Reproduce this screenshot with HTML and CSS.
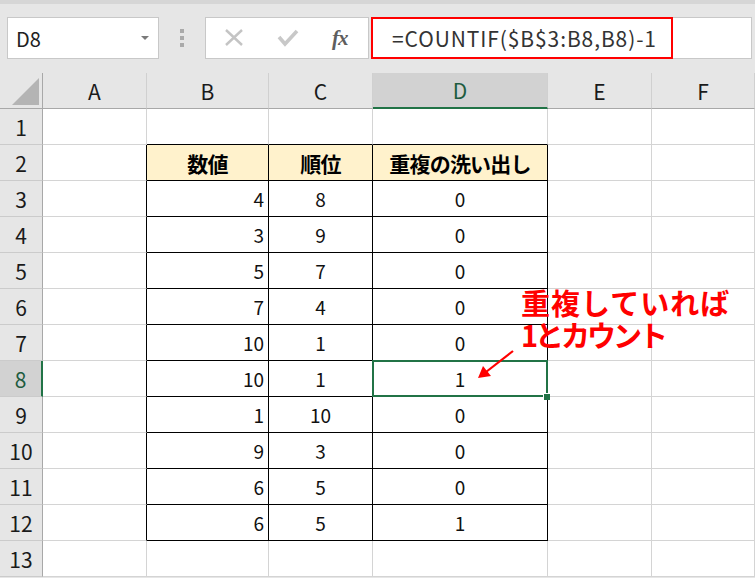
FILE: index.html
```html
<!DOCTYPE html>
<html lang="ja">
<head>
<meta charset="utf-8">
<title>COUNTIF 重複</title>
<link rel="stylesheet" href="styles.css">
</head>
<body>
<div class="app">
  <div class="topstrip"></div>
  <div class="toolbar">
    <div class="namebox"><span>D8</span><span class="dd"></span></div>
    <div class="grip"><i></i><i></i><i></i></div>
    <div class="btns">
      <svg class="ico" width="20" height="20" viewBox="0 0 20 20"><path d="M2 2 L18 17 M18 2 L2 17" stroke="#c4c4c4" stroke-width="2.4" fill="none"/></svg>
      <svg class="ico" width="22" height="20" viewBox="0 0 22 20"><path d="M2 9 L8 16 L20 3" stroke="#c8c8c8" stroke-width="3.6" fill="none"/></svg>
      <span class="fx">fx</span>
    </div>
    <div class="formula"><div class="fbox">=COUNTIF($B$3:B8,B8)-1</div></div>
  </div>
  <div class="sheet">
    <div class="c corner"><span class="tri"></span></div>
    <div class="c ch">A</div><div class="c ch">B</div><div class="c ch">C</div><div class="c ch sel">D</div><div class="c ch">E</div><div class="c ch">F</div>

    <div class="c rh">1</div><div class="c"></div><div class="c tt"></div><div class="c tt"></div><div class="c tt"></div><div class="c"></div><div class="c"></div>

    <div class="c rh">2</div><div class="c tl"></div><div class="c t hd m">数値</div><div class="c t hd m">順位</div><div class="c t hd m">重複の洗い出し</div><div class="c"></div><div class="c"></div>

    <div class="c rh">3</div><div class="c tl"></div><div class="c t r">4</div><div class="c t m">8</div><div class="c t m">0</div><div class="c"></div><div class="c"></div>
    <div class="c rh">4</div><div class="c tl"></div><div class="c t r">3</div><div class="c t m">9</div><div class="c t m">0</div><div class="c"></div><div class="c"></div>
    <div class="c rh">5</div><div class="c tl"></div><div class="c t r">5</div><div class="c t m">7</div><div class="c t m">0</div><div class="c"></div><div class="c"></div>
    <div class="c rh">6</div><div class="c tl"></div><div class="c t r">7</div><div class="c t m">4</div><div class="c t m">0</div><div class="c"></div><div class="c"></div>
    <div class="c rh">7</div><div class="c tl"></div><div class="c t r">10</div><div class="c t m">1</div><div class="c t m">0</div><div class="c"></div><div class="c"></div>
    <div class="c rh selr">8</div><div class="c tl"></div><div class="c t r">10</div><div class="c t m">1</div><div class="c t m active">1</div><div class="c"></div><div class="c"></div>
    <div class="c rh">9</div><div class="c tl"></div><div class="c t r">1</div><div class="c t m">10</div><div class="c t m">0</div><div class="c"></div><div class="c"></div>
    <div class="c rh">10</div><div class="c tl"></div><div class="c t r">9</div><div class="c t m">3</div><div class="c t m">0</div><div class="c"></div><div class="c"></div>
    <div class="c rh">11</div><div class="c tl"></div><div class="c t r">6</div><div class="c t m">5</div><div class="c t m">0</div><div class="c"></div><div class="c"></div>
    <div class="c rh">12</div><div class="c tl"></div><div class="c t r">6</div><div class="c t m">5</div><div class="c t m">1</div><div class="c"></div><div class="c"></div>
    <div class="c rh">13</div><div class="c"></div><div class="c"></div><div class="c"></div><div class="c"></div><div class="c"></div><div class="c"></div>
  </div>
  <div class="note"><div class="l1">重複していれば</div><div class="l2">1とカウント</div></div>
  <svg class="arrow" width="755" height="578" viewBox="0 0 755 578">
    <line x1="513" y1="351" x2="486" y2="372" stroke="#ff0000" stroke-width="2.2"/>
    <polygon points="478,378 483,366 491,376" fill="#ff0000"/>
  </svg>
</div>
</body>
</html>
```
FILE: styles.css
```css
html, body { margin: 0; padding: 0; }
body {
  background: #e6e6e6;
  font-family: "Noto Sans CJK JP", "Noto Sans", sans-serif;
}
.app {
  position: relative;
  width: 755px;
  height: 578px;
  overflow: hidden;
  background: #e6e6e6;
}
.topstrip {
  height: 4px;
  background: #d6d6d6;
}
.toolbar {
  height: 69px;
  box-sizing: border-box;
  padding: 13px 3px 0 7px;
  display: flex;
  align-items: flex-start;
}
.namebox {
  width: 152px;
  height: 42px;
  box-sizing: border-box;
  background: #fff;
  border: 1px solid #c8c8c8;
  display: flex;
  align-items: center;
  justify-content: space-between;
  padding: 0 9px 0 8px;
  font-size: 20px;
  color: #222;
}
.dd {
  width: 0; height: 0;
  border-left: 4px solid transparent;
  border-right: 4px solid transparent;
  border-top: 4px solid #7a7a7a;
}
.grip {
  width: 46px;
  height: 42px;
  display: flex;
  flex-direction: column;
  align-items: center;
  justify-content: center;
  gap: 3px;
}
.grip i {
  display: block;
  width: 4px;
  height: 4px;
  background: #aaaaaa;
}
.btns {
  width: 164px;
  height: 42px;
  box-sizing: border-box;
  background: #fff;
  border: 1px solid #c8c8c8;
  display: flex;
  align-items: center;
  padding-left: 18px;
  gap: 33px;
}
.ico { display: block; }
.fx {
  font-family: "Liberation Serif", "DejaVu Serif", serif;
  font-style: italic;
  font-weight: bold;
  font-size: 21px;
  color: #5e5e5e;
  margin-left: 0;
  letter-spacing: -1px;
}
.formula {
  flex: 1;
  margin-left: 2px;
  height: 42px;
  box-sizing: border-box;
  background: #fff;
  border: 1px solid #c8c8c8;
  border-left: 0;
}
.fbox {
  width: 302px;
  height: 42px;
  margin-top: -1px;
  box-sizing: border-box;
  border: 2px solid #ff0000;
  padding-left: 19px;
  display: flex;
  align-items: center;
  font-family: "Noto Sans CJK JP", "Noto Sans", sans-serif;
  font-size: 21px;
  letter-spacing: 0.9px;
  color: #333;
  white-space: nowrap;
}
.sheet {
  display: grid;
  grid-template-columns: 43px 104px 122px 104px 175px 104px 103px;
  grid-auto-rows: 36px;
  background: #fff;
}
.c {
  box-sizing: border-box;
  border-right: 1px solid #d4d4d4;
  border-bottom: 1px solid #d4d4d4;
  display: flex;
  align-items: center;
  justify-content: center;
  font-size: 19px;
  color: #111;
  white-space: nowrap;
}
.corner {
  position: relative;
  background: #e6e6e6;
  border-right: 1px solid #a8a8a8;
  border-bottom: 1px solid #a8a8a8;
}
.tri {
  position: absolute;
  right: 3px;
  bottom: 3px;
  width: 0; height: 0;
  border-left: 27px solid transparent;
  border-bottom: 27px solid #b4b4b4;
}
.ch {
  background: #e6e6e6;
  border-bottom: 1px solid #a8a8a8;
  border-right: 1px solid #d0d0d0;
  font-size: 21px;
  color: #1a1a1a;
}
.ch.sel {
  background: #d2d2d2;
  border-bottom: 2px solid #217346;
  color: #1e5c40;
}
.rh {
  background: #e6e6e6;
  border-right: 1px solid #a8a8a8;
  border-bottom: 1px solid #cbcbcb;
  font-size: 21px;
  color: #1a1a1a;
}
.rh.selr {
  background: #d2d2d2;
  border-right: 2px solid #217346;
  color: #1e5c40;
}
.t { border-right-color: #000; border-bottom-color: #000; }
.tl { border-right-color: #000; }
.tt { border-bottom-color: #000; }
.hd {
  background: #fff2cc;
  font-weight: bold;
  font-size: 21px;
  letter-spacing: -0.8px;
  color: #000;
}
.r { justify-content: flex-end; padding-right: 4px; }
.m { justify-content: center; }
.active { position: relative; z-index: 2; }
.active::before {
  content: "";
  position: absolute;
  top: -1px; left: -1px; right: -1px; bottom: -1px;
  border: 2px solid #217346;
}
.active::after {
  content: "";
  position: absolute;
  right: -3px;
  bottom: -4px;
  width: 6px;
  height: 6px;
  background: #217346;
  border-left: 1px solid #fff;
  border-top: 1px solid #fff;
}
.note {
  position: absolute;
  left: 521px;
  top: 286px;
  color: #ff0000;
  font-weight: bold;
  font-size: 29px;
  line-height: 32px;
  white-space: nowrap;
  z-index: 3;
}
.note .l1 { letter-spacing: 1px; }
.note .l2 { letter-spacing: -3px; }
.arrow {
  position: absolute;
  left: 0;
  top: 0;
  z-index: 3;
  pointer-events: none;
}
```
